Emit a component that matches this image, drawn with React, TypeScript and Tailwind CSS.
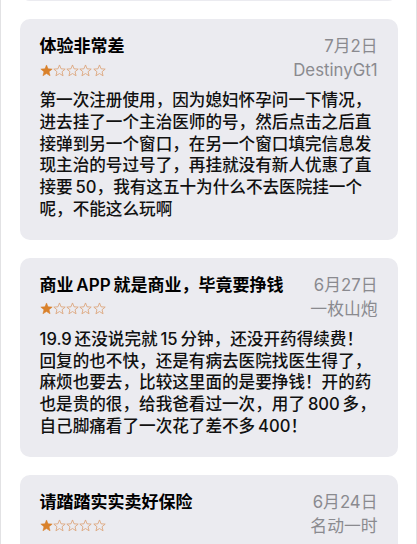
import type { ReactElement } from 'react';

interface Review {
  title: string;
  date: string;
  author: string;
  rating: number;
  body?: string;
}

// thin space, like the auto-spacing between CJK and digits in the original
const t = '\u2009';

const reviews: Review[] = [
  {
    title: '体验非常差',
    date: '7月2日',
    author: 'DestinyGt1',
    rating: 1,
    body: `第一次注册使用，因为媳妇怀孕问一下情况，进去挂了一个主治医师的号，然后点击之后直接弹到另一个窗口，在另一个窗口填完信息发现主治的号过号了，再挂就没有新人优惠了直接要${t}50，我有这五十为什么不去医院挂一个呢，不能这么玩啊`,
  },
  {
    title: `商业${t}APP${t}就是商业，毕竟要挣钱`,
    date: '6月27日',
    author: '一枚山炮',
    rating: 1,
    body: `19.9${t}还没说完就${t}15${t}分钟，还没开药得续费！回复的也不快，还是有病去医院找医生得了，麻烦也要去，比较这里面的是要挣钱！开的药也是贵的很，给我爸看过一次，用了${t}800${t}多，自己脚痛看了一次花了差不多${t}400！`,
  },
  {
    title: '请踏踏实实卖好保险',
    date: '6月24日',
    author: '名动一时',
    rating: 1,
    body: '',
  },
];

function Star({ filled }: { filled: boolean }): ReactElement {
  return (
    <svg width="13" height="13" viewBox="0 0 24 24" className="shrink-0">
      <path
        d="M12 1.8l2.9 7.1 7.6.5-5.8 4.9 1.9 7.4L12 17.6l-6.6 4.1 1.9-7.4-5.8-4.9 7.6-.5z"
        fill={filled ? '#d9812b' : 'none'}
        stroke={filled ? '#d9812b' : '#dca478'}
        strokeWidth={filled ? 1 : 1.6}
        strokeLinejoin="round"
      />
    </svg>
  );
}

function ReviewCard({ review }: { review: Review }): ReactElement {
  return (
    <div className="rounded-[10px] bg-[#ebebf0] px-[20px] pt-[17px] pb-[19px]">
      <div className="flex items-start justify-between gap-3 leading-[20px]">
        <span className="text-[17px] font-semibold text-black">{review.title}</span>
        <span className="shrink-0 text-[16.8px] text-[#8a8a8f]">{review.date}</span>
      </div>
      <div className="mt-[3px] flex items-center justify-between leading-[22px]">
        <div className="flex gap-[0.3px]">
          {[0, 1, 2, 3, 4].map((i) => (
            <Star key={i} filled={i < review.rating} />
          ))}
        </div>
        <span className="text-[16.8px] text-[#8a8a8f]">{review.author}</span>
      </div>
      {review.body ? (
        <p className="mt-[9px] text-[16.6px] font-medium leading-[21.8px] text-[#111]">
          {review.body}
        </p>
      ) : null}
    </div>
  );
}

export default function App(): ReactElement {
  return (
    <div
      className="h-[544px] w-[417px] overflow-hidden border-x-[1.5px] border-[#e2e2e4] bg-white px-[18.5px]"
      style={{ fontFamily: 'Inter, "Noto Sans CJK SC", sans-serif' }}
    >
      <div className="flex flex-col gap-[18px]">
        <div className="-mt-[39px] h-[40px] rounded-[10px] bg-[#ebebf0]" />
        {reviews.map((review) => (
          <ReviewCard key={review.title} review={review} />
        ))}
      </div>
    </div>
  );
}
